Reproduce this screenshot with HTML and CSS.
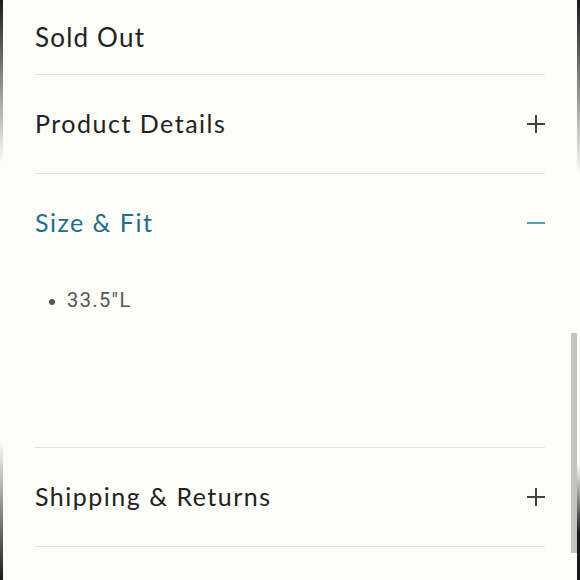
FILE: index.html
```html
<!DOCTYPE html>
<html>
    <head>
        <title>Product details</title>
        <link rel="stylesheet" href="styles.css">
    </head>
    <body>
        <div class="page">
            <p class="status">Sold Out</p>
            <section class="item">
                <div class="item-head">
                    <h2>Product Details</h2>
                    <span class="toggle plus"></span>
                </div>
            </section>
            <section class="item open">
                <div class="item-head">
                    <h2>Size &amp; Fit</h2>
                    <span class="toggle minus"></span>
                </div>
                <ul class="item-body">
                    <li>33.5"L</li>
                </ul>
            </section>
            <section class="item">
                <div class="item-head">
                    <h2>Shipping &amp; Returns</h2>
                    <span class="toggle plus"></span>
                </div>
            </section>
        </div>
        <div class="edge left"></div>
        <div class="edge right"></div>
        <div class="scroll-thumb"></div>
    </body>
</html>
```

FILE: styles.css
```css
body {
    margin: 0;
    padding: 0;
    background: #fcfcf8;
    font-family: "Lato", "Noto Sans", sans-serif;
    color: #222;
    overflow: hidden;
}
.page {
    margin: 0 35px;
    width: 510px;
}
.status {
    margin: 0;
    height: 74px;
    display: flex;
    align-items: center;
    font-size: 26px;
    letter-spacing: 1.2px;
}
.item {
    border-top: 1px solid #e3e3df;
}
.item:last-child {
    border-bottom: 1px solid #e3e3df;
}
.item-head {
    height: 98px;
    display: flex;
    align-items: center;
    justify-content: space-between;
}
.item-head h2 {
    margin: 0 0 3px;
    font-size: 25px;
    font-weight: normal;
    letter-spacing: 1.5px;
}
.open .item-head h2 {
    color: #1f6f86;
}
.toggle {
    position: relative;
    width: 18px;
    height: 18px;
}
.toggle::before,
.toggle::after {
    content: "";
    position: absolute;
    background: #444;
}
.toggle::before {
    left: 0;
    top: 8px;
    width: 18px;
    height: 1.5px;
}
.plus::after {
    left: 8px;
    top: 0;
    width: 1.5px;
    height: 18px;
}
.minus::before {
    background: #5d9db2;
    height: 2px;
}
.minus::after {
    display: none;
}
.item-body {
    margin: 0;
    height: 175px;
    padding: 16px 0 0 32px;
    box-sizing: border-box;
    font-family: "Roboto", sans-serif;
    font-size: 20px;
    color: #555;
    letter-spacing: 1.4px;
}
.item-body li::marker {
    font-size: 18px;
}
/* dark strips at the screen edges */
.edge {
    position: fixed;
    top: 0;
    width: 3px;
    height: 580px;
    background: linear-gradient(#1a1a1a, rgba(30,30,30,0) 28%, rgba(30,30,30,0) 76%, #1a1a1a);
}
.left {
    left: 0;
}
.right {
    right: 0;
    background: linear-gradient(#1a1a1a, rgba(30,30,30,0) 30%, rgba(30,30,30,0) 80%, #1a1a1a 92%);
}
.scroll-thumb {
    position: fixed;
    left: 571px;
    top: 333px;
    width: 6px;
    height: 220px;
    background: #c2c2c0;
}
```
